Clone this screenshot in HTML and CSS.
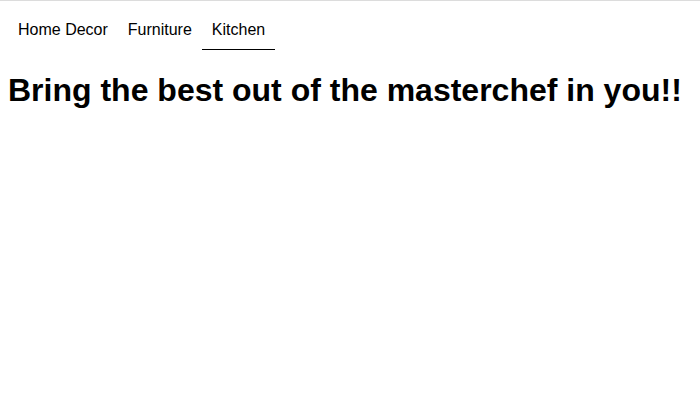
FILE: index.html
```html
<!DOCTYPE html>
<html>
<head>
<meta charset="utf-8">
<link rel="stylesheet" href="styles.css">
</head>
<body>
<div class="topline"></div>
<nav class="tabs">
  <a class="tab">Home Decor</a>
  <a class="tab">Furniture</a>
  <a class="tab active">Kitchen</a>
</nav>
<h1 class="title">Bring the best out of the masterchef in you!!</h1>
</body>
</html>
```
FILE: styles.css
```css
html, body {
  margin: 0;
  padding: 0;
  background: #fff;
}
body {
  font-family: "Liberation Sans", Arial, sans-serif;
  color: #000;
}
.topline {
  height: 1px;
  background: #dcdcdc;
}
.tabs {
  display: flex;
  padding: 10px 8px 0;
}
.tab {
  padding: 10px 10px;
  font-size: 16px;
  line-height: 18px;
  border-bottom: 1px solid transparent;
}
.tab.active {
  border-bottom-color: #000;
}
.title {
  margin: 22px 8px 0;
  font-size: 32px;
  font-weight: bold;
}
```
